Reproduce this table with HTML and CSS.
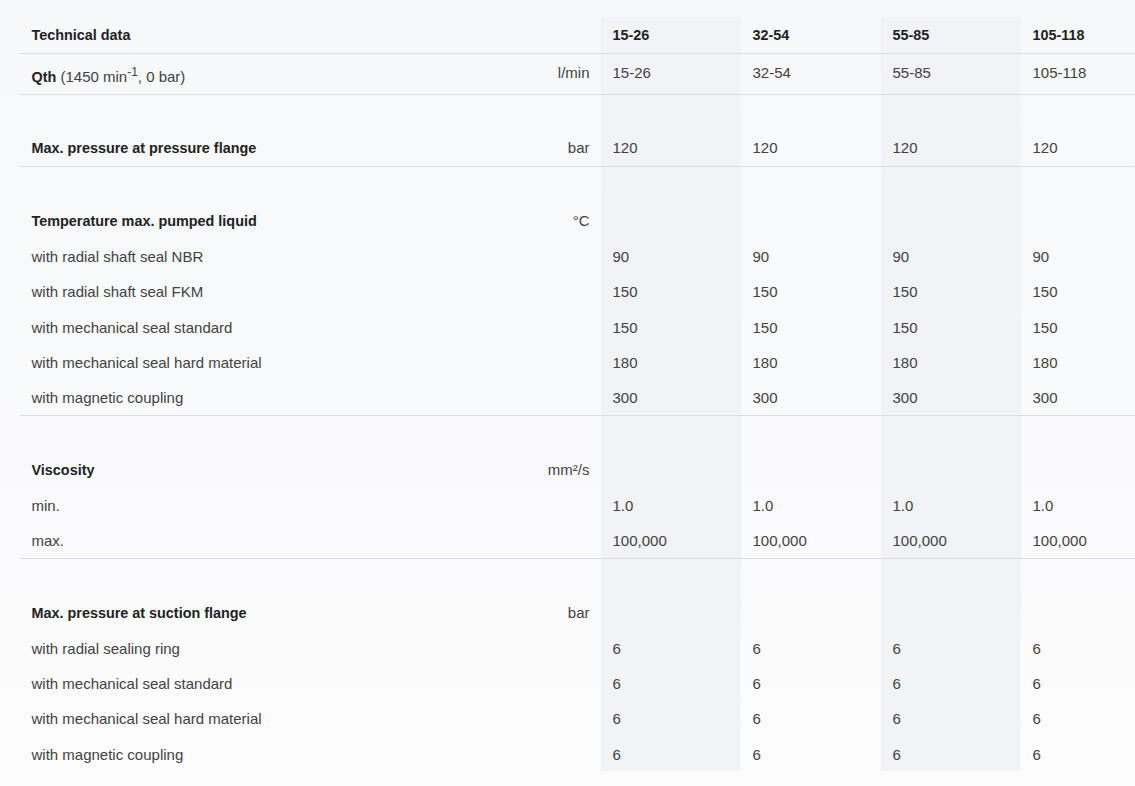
FILE: index.html
```html
<!DOCTYPE html>
<html lang="en">
<head>
<meta charset="utf-8">
<title>Technical data</title>
<link rel="stylesheet" href="styles.css">
</head>
<body>
<div class="wrap">
<table class="tech">
  <colgroup>
    <col class="c-label">
    <col class="c-unit">
    <col class="c-val shade">
    <col class="c-val">
    <col class="c-val shade">
    <col class="c-val">
  </colgroup>
  <thead>
    <tr class="sep head">
      <th class="lbl">Technical data</th>
      <th class="unit"></th>
      <th>15-26</th>
      <th>32-54</th>
      <th>55-85</th>
      <th>105-118</th>
    </tr>
  </thead>
  <tbody>
    <tr class="sep qth">
      <td class="lbl"><b>Qth</b> (1450 min<sup>-1</sup>, 0 bar)</td>
      <td class="unit">l/min</td>
      <td>15-26</td><td>32-54</td><td>55-85</td><td>105-118</td>
    </tr>
    <tr class="gap"><td></td><td></td><td></td><td></td><td></td><td></td></tr>
    <tr class="sep">
      <td class="lbl"><b>Max. pressure at pressure flange</b></td>
      <td class="unit">bar</td>
      <td>120</td><td>120</td><td>120</td><td>120</td>
    </tr>

    <tr class="gap"><td></td><td></td><td></td><td></td><td></td><td></td></tr>
    <tr>
      <td class="lbl"><b>Temperature max. pumped liquid</b></td>
      <td class="unit">°C</td>
      <td></td><td></td><td></td><td></td>
    </tr>
    <tr>
      <td class="lbl">with radial shaft seal NBR</td><td class="unit"></td>
      <td>90</td><td>90</td><td>90</td><td>90</td>
    </tr>
    <tr>
      <td class="lbl">with radial shaft seal FKM</td><td class="unit"></td>
      <td>150</td><td>150</td><td>150</td><td>150</td>
    </tr>
    <tr>
      <td class="lbl">with mechanical seal standard</td><td class="unit"></td>
      <td>150</td><td>150</td><td>150</td><td>150</td>
    </tr>
    <tr>
      <td class="lbl">with mechanical seal hard material</td><td class="unit"></td>
      <td>180</td><td>180</td><td>180</td><td>180</td>
    </tr>
    <tr class="sep">
      <td class="lbl">with magnetic coupling</td><td class="unit"></td>
      <td>300</td><td>300</td><td>300</td><td>300</td>
    </tr>

    <tr class="gap"><td></td><td></td><td></td><td></td><td></td><td></td></tr>
    <tr>
      <td class="lbl"><b>Viscosity</b></td>
      <td class="unit">mm²/s</td>
      <td></td><td></td><td></td><td></td>
    </tr>
    <tr>
      <td class="lbl">min.</td><td class="unit"></td>
      <td>1.0</td><td>1.0</td><td>1.0</td><td>1.0</td>
    </tr>
    <tr class="sep">
      <td class="lbl">max.</td><td class="unit"></td>
      <td>100,000</td><td>100,000</td><td>100,000</td><td>100,000</td>
    </tr>

    <tr class="gap"><td></td><td></td><td></td><td></td><td></td><td></td></tr>
    <tr>
      <td class="lbl"><b>Max. pressure at suction flange</b></td>
      <td class="unit">bar</td>
      <td></td><td></td><td></td><td></td>
    </tr>
    <tr>
      <td class="lbl">with radial sealing ring</td><td class="unit"></td>
      <td>6</td><td>6</td><td>6</td><td>6</td>
    </tr>
    <tr>
      <td class="lbl">with mechanical seal standard</td><td class="unit"></td>
      <td>6</td><td>6</td><td>6</td><td>6</td>
    </tr>
    <tr>
      <td class="lbl">with mechanical seal hard material</td><td class="unit"></td>
      <td>6</td><td>6</td><td>6</td><td>6</td>
    </tr>
    <tr>
      <td class="lbl">with magnetic coupling</td><td class="unit"></td>
      <td>6</td><td>6</td><td>6</td><td>6</td>
    </tr>
  </tbody>
</table>
</div>
</body>
</html>
```

FILE: styles.css
```css
html, body {
  margin: 0;
  padding: 0;
}

body {
  min-height: 786px;
  background: linear-gradient(#f7f8fa, #fcfcfd);
  font-family: "Liberation Sans", Arial, sans-serif;
}

.wrap {
  padding: 17px 0 0 20px;
  overflow: hidden;
}

.tech {
  border-collapse: collapse;
  table-layout: fixed;
  width: 1141px;
  font-size: 15px;
  color: #424242;
}

.c-label { width: 480px; }
.c-unit { width: 101px; }
.c-val { width: 140px; }
.shade { background: #f2f3f6; }

.tech th,
.tech td {
  padding: 8.5px 11.5px 7.5px;
  line-height: 19.25px;
  text-align: left;
  vertical-align: top;
  white-space: nowrap;
}

.tech tr.head > th {
  padding-bottom: 8.5px;
}

.tech tr.qth > td {
  padding-bottom: 6.5px;
}

.tech th {
  font-size: 14.4px;
  font-weight: bold;
  color: #222;
}

.tech td b {
  font-size: 14.4px;
  font-weight: bold;
  color: #222;
}

.tech .unit {
  text-align: right;
}

.tech sup {
  font-size: 12px;
}

.tech tr.sep > th,
.tech tr.sep > td {
  border-bottom: 1px solid #dcdde0;
}

.tech tr.gap > td {
  height: 19.25px;
}
```
